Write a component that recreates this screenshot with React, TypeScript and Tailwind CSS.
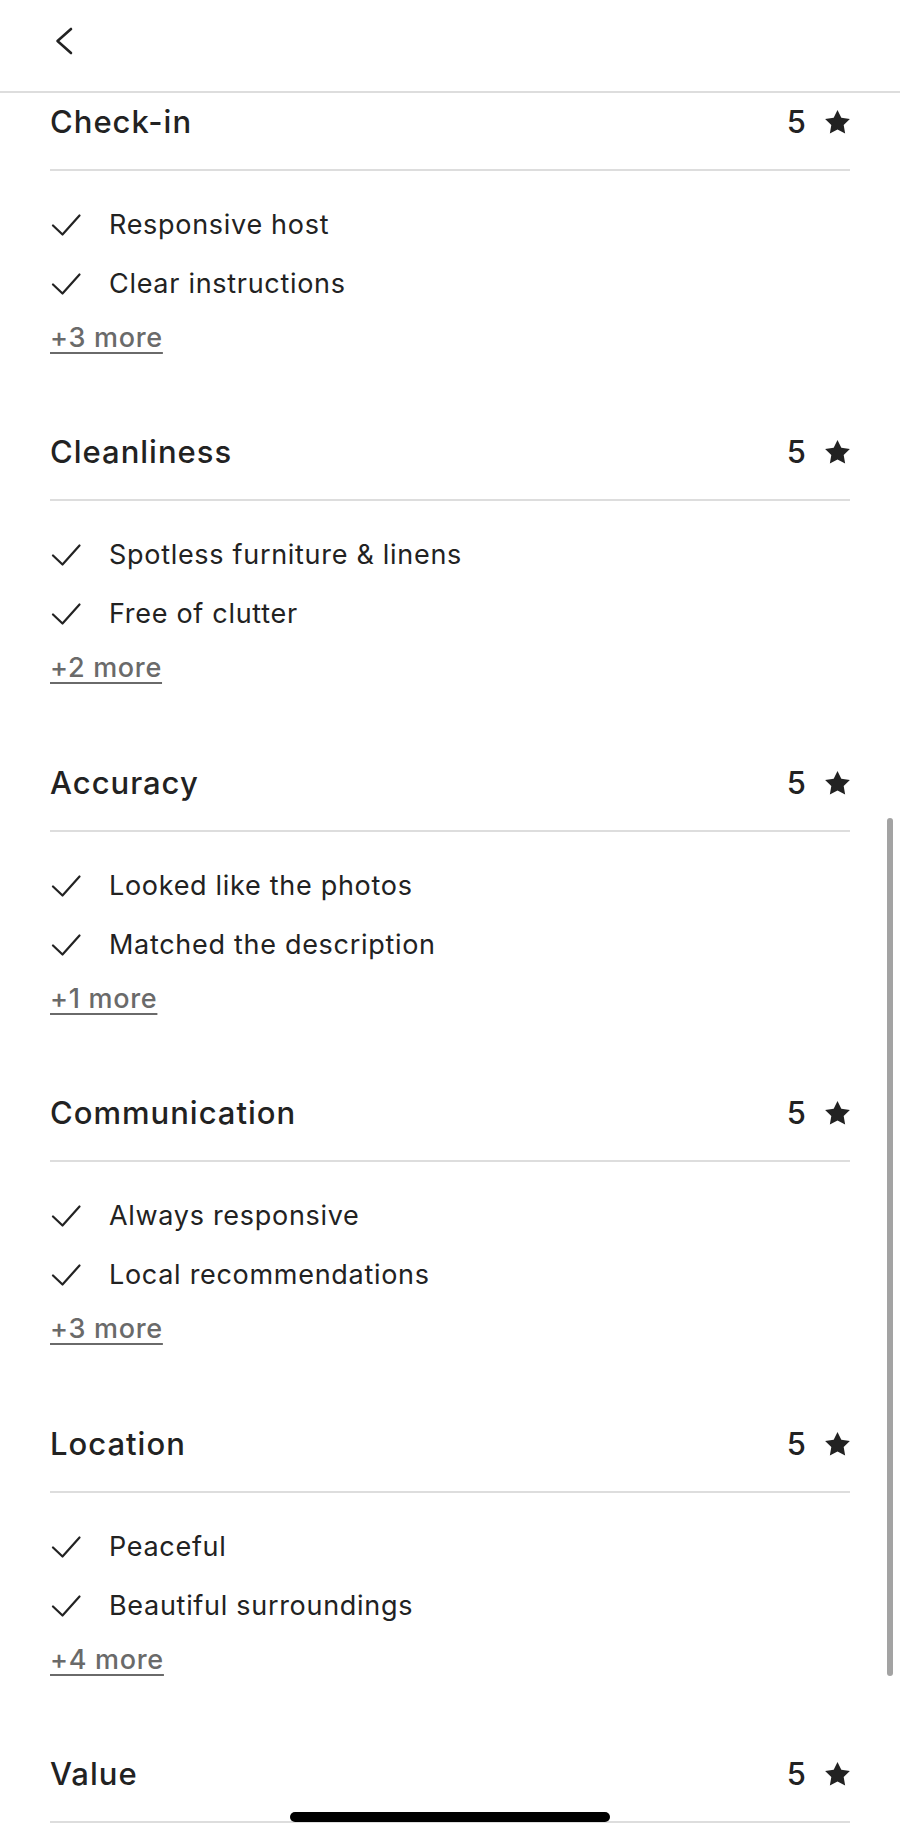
import React from "react";

const sections = [
  { title: "Check-in", items: ["Responsive host", "Clear instructions"], more: "+3 more" },
  { title: "Cleanliness", items: ["Spotless furniture & linens", "Free of clutter"], more: "+2 more" },
  { title: "Accuracy", items: ["Looked like the photos", "Matched the description"], more: "+1 more" },
  { title: "Communication", items: ["Always responsive", "Local recommendations"], more: "+3 more" },
  { title: "Location", items: ["Peaceful", "Beautiful surroundings"], more: "+4 more" },
  { title: "Value", items: [], more: "" },
];

function Star() {
  return (
    <svg width="25" height="24" viewBox="2 2 20 19.4" className="block">
      <polygon
        points="12,2 15.09,8.26 22,9.27 17,14.14 18.18,21.02 12,17.77 5.82,21.02 7,14.14 2,9.27 8.91,8.26"
        fill="#222222"
        strokeLinejoin="round"
      />
    </svg>
  );
}

function Check() {
  return (
    <svg width="30" height="22" viewBox="0 0 30 22" className="block">
      <polyline
        points="2,11.5 11.5,20.5 28.5,1.5"
        fill="none"
        stroke="#222222"
        strokeWidth="2.2"
        strokeLinecap="round"
        strokeLinejoin="round"
      />
    </svg>
  );
}

export default function App() {
  return (
    <div
      className="relative w-[900px] h-[1839px] overflow-hidden bg-white text-[#222222]"
      style={{ fontFamily: "Inter, 'Noto Sans', sans-serif" }}
    >
      <div className="h-[93px] border-b-2 border-[#dddddd] flex items-start pl-[54px] pt-[26px]">
        <svg width="20" height="30" viewBox="0 0 20 30" className="block">
          <polyline
            points="17,3 3.5,15 17,27"
            fill="none"
            stroke="#222222"
            strokeWidth="2.6"
            strokeLinecap="round"
            strokeLinejoin="round"
          />
        </svg>
      </div>

      <div className="flex flex-col pt-[9px] px-[50px]">
        {sections.map((s) => (
          <div key={s.title} className="flex flex-col pb-[74.4px]">
            <div className="flex items-center justify-between h-[40px]">
              <span className="text-[31px] font-medium leading-[40px] tracking-[1px]">{s.title}</span>
              <div className="flex items-center gap-[19px]">
                <span className="text-[31px] font-medium leading-[40px]">5</span>
                <Star />
              </div>
            </div>
            <div className="mt-[27px] h-[2px] bg-[#dddddd]" />
            {s.items.length > 0 && (
              <div className="flex flex-col mt-[29px]">
                {s.items.map((it, i) => (
                  <div key={it} className={"flex items-center h-[50px] " + (i > 0 ? "mt-[9px]" : "")}>
                    <div className="w-[59px] flex items-center pl-[1px]">
                      <Check />
                    </div>
                    <span className="text-[27px] leading-[50px] tracking-[0.7px]">{it}</span>
                  </div>
                ))}
                <div className="mt-[9px] h-[40px] flex items-center">
                  <span className="text-[27px] font-medium leading-[40px] tracking-[0.7px] text-[#6a6a6a] underline decoration-2 underline-offset-[5px]">
                    {s.more}
                  </span>
                </div>
              </div>
            )}
          </div>
        ))}
      </div>

      <div className="absolute left-[887px] top-[818px] w-[6px] h-[858px] rounded-full bg-[#a3a3a3]" />
      <div className="absolute left-[290px] top-[1812px] w-[320px] h-[10px] rounded-full bg-black" />
    </div>
  );
}
